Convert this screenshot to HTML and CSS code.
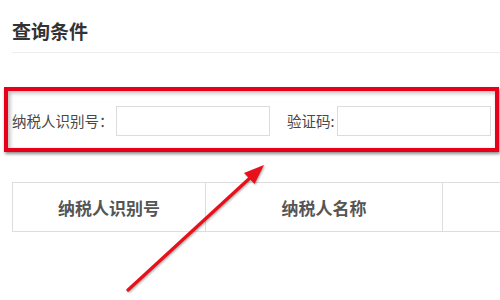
FILE: index.html
```html
<!DOCTYPE html>
<html lang="zh-CN">
<head>
<meta charset="utf-8">
<link rel="stylesheet" href="styles.css">
</head>
<body>
<div class="page">
  <h1 class="title">查询条件</h1>
  <div class="form-row">
    <label class="label label-id">纳税人识别号：</label>
    <input class="field" type="text">
    <label class="label label-code">验证码:</label>
    <input class="field" type="text">
  </div>
  <table class="result">
    <thead>
      <tr>
        <th class="col-id">纳税人识别号</th>
        <th class="col-name">纳税人名称</th>
        <th class="col-rest"></th>
      </tr>
    </thead>
  </table>
  <div class="highlight-box"></div>
  <svg class="arrow" width="500" height="300" viewBox="0 0 500 300">
    <line x1="128" y1="290" x2="251" y2="177" stroke="#e8101a" stroke-width="3.2" stroke-linecap="round"/>
    <polygon points="264,165 254.5,184 244,173" fill="#e8101a"/>
  </svg>
</div>
</body>
</html>
```

FILE: styles.css
```css
html, body {
  margin: 0;
  padding: 0;
  background: #fff;
}
body {
  width: 500px;
  height: 300px;
  overflow: hidden;
  font-family: "Noto Sans CJK SC", "Noto Sans", sans-serif;
}
.page {
  position: relative;
  width: 500px;
  height: 300px;
  padding-left: 12px;
  box-sizing: border-box;
  overflow: hidden;
}
.title {
  margin: 0;
  padding-top: 18px;
  padding-bottom: 8px;
  font-size: 19px;
  line-height: 26px;
  font-weight: bold;
  color: #333;
  border-bottom: 1px solid #eee;
}
.form-row {
  display: flex;
  align-items: center;
  margin-top: 53px;
  height: 30px;
}
.label {
  font-size: 14.5px;
  color: #484848;
  line-height: 30px;
  white-space: nowrap;
}
.label-id {
  width: 104px;
}
.label-code {
  margin-left: 17px;
  width: 50px;
}
.field {
  box-sizing: border-box;
  width: 154px;
  height: 30px;
  margin: 0;
  padding: 0 6px;
  border: 1px solid #dcdcdc;
  background: #fff;
  outline: none;
}
.result {
  margin-top: 46px;
  border-collapse: collapse;
  table-layout: fixed;
  width: 488px;
}
.result th {
  height: 48px;
  border: 1px solid #ddd;
  font-size: 17px;
  font-weight: bold;
  color: #555;
  text-align: center;
  padding: 0;
}
.result th.col-rest {
  border-right: none;
}
.col-id { width: 192px; }
.col-name { width: 236px; }
.highlight-box {
  position: absolute;
  left: 4px;
  top: 87px;
  width: 495px;
  height: 65px;
  box-sizing: border-box;
  border: 4px solid #e8001a;
  box-shadow: 1px 2px 3px rgba(0,0,0,0.45), inset 2px 2px 4px rgba(0,0,0,0.28);
}
.arrow {
  position: absolute;
  left: 0;
  top: 0;
  filter: drop-shadow(1px 1px 1px rgba(0,0,0,0.35));
}
```
